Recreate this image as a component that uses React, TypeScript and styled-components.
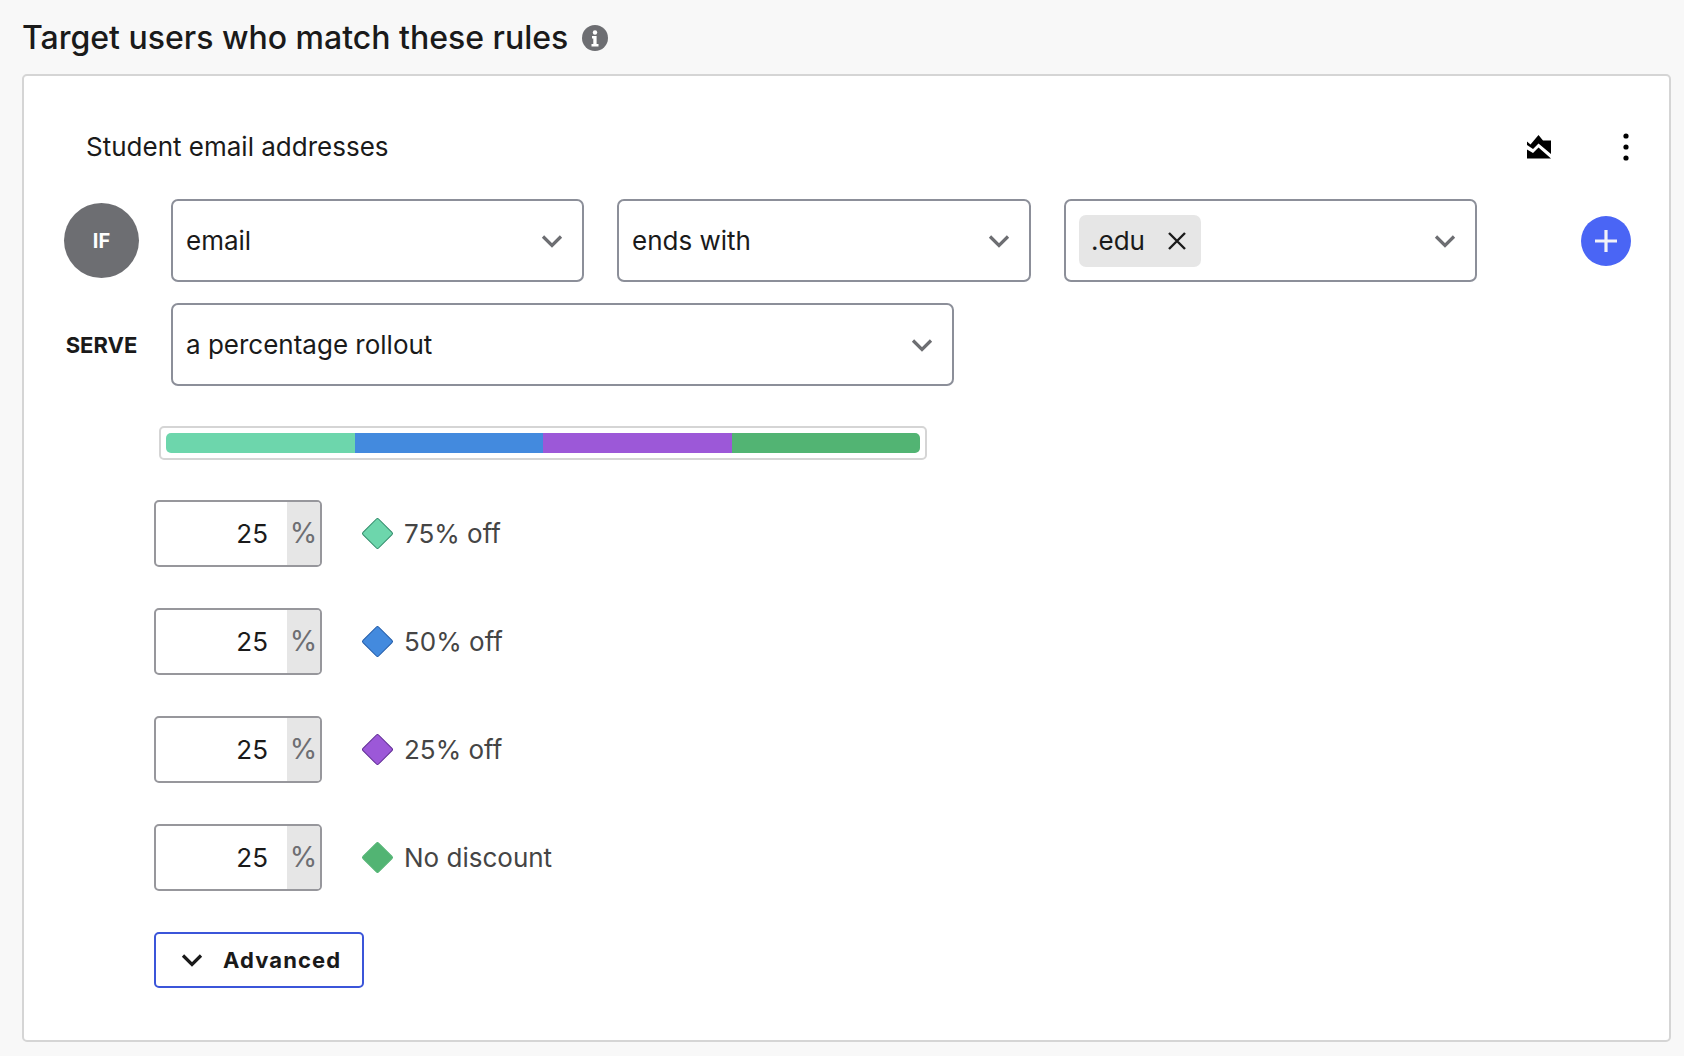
import React from "react";
import styled, { createGlobalStyle } from "styled-components";

const Global = createGlobalStyle`
  html, body { margin: 0; padding: 0; background: #f8f8f8; }
  body { font-family: Inter, "Liberation Sans", sans-serif; color: #1a1a1a; }
`;

const Page = styled.div`
  width: 1684px;
  height: 1056px;
  box-sizing: border-box;
  padding: 17px 13px 0 22px;
  overflow: hidden;
`;
const HeadingRow = styled.div`
  display: flex;
  align-items: center;
  gap: 14px;
  height: 42px;
  margin-bottom: 15px;
`;
const Heading = styled.h2`
  margin: 0;
  font-size: 32px;
  font-weight: 500;
  line-height: 42px;
  color: #1a1a1a;
`;
const Card = styled.section`
  box-sizing: border-box;
  height: 968px;
  background: #fff;
  border: 2px solid #d5d5d5;
  border-radius: 5px;
  padding: 46px 38px 0 40px;
`;
const TitleRow = styled.div`
  display: flex;
  align-items: center;
  height: 50px;
  margin-bottom: 27px;
  padding-left: 22px;
`;
const Title = styled.div`
  flex: 1;
  font-size: 26px;
  line-height: 50px;
`;
const IconSlot = styled.span`
  display: flex;
  align-items: center;
  justify-content: center;
  width: ${(p: { $w: number }) => p.$w}px;
  height: 30px;
`;
const DotsGap = styled.span`
  width: 70px;
`;
const RuleRow = styled.div`
  display: flex;
  align-items: center;
  margin-bottom: 21px;
`;
const IfBadge = styled.div`
  width: 75px;
  height: 75px;
  flex: none;
  margin-right: 32px;
  border-radius: 50%;
  background: #6d6e72;
  color: #fff;
  font-size: 20px;
  font-weight: 700;
  display: flex;
  align-items: center;
  justify-content: center;
`;
const ServeLabel = styled.div`
  width: 75px;
  flex: none;
  margin-right: 32px;
  font-size: 22px;
  font-weight: 700;
  text-align: center;
`;
const Select = styled.div<{ $w: number }>`
  box-sizing: border-box;
  width: ${(p) => p.$w}px;
  height: 83px;
  flex: none;
  margin-right: 33px;
  padding: 0 19px 0 13px;
  border: 2px solid #8c8f99;
  border-radius: 7px;
  background: #fff;
  display: flex;
  align-items: center;
  justify-content: space-between;
  font-size: 26px;
`;
const Tag = styled.div`
  height: 52px;
  width: 122px;
  box-sizing: border-box;
  padding: 0 14px 0 12px;
  border-radius: 7px;
  background: #e6e6e6;
  display: flex;
  align-items: center;
  justify-content: space-between;
`;
const AddButton = styled.button`
  width: 50px;
  height: 50px;
  margin-left: auto;
  padding: 0;
  border: 0;
  border-radius: 50%;
  background: #4a65f5;
  display: flex;
  align-items: center;
  justify-content: center;
`;
const Rollout = styled.div`
  padding-left: 90px;
  margin-top: 40px;
`;
const Bar = styled.div`
  box-sizing: border-box;
  width: 768px;
  height: 34px;
  margin: 0 0 40px 5px;
  padding: 5px;
  border: 2px solid #d5d5d5;
  border-radius: 5px;
  display: flex;
`;
const BarInner = styled.div`
  flex: 1;
  display: flex;
  border-radius: 5px;
  overflow: hidden;
`;
const Segment = styled.div<{ $c: string }>`
  flex: 1;
  background: ${(p) => p.$c};
`;
const VariationRow = styled.div`
  display: flex;
  align-items: center;
  height: 67px;
  margin-bottom: 41px;
`;
const PercentBox = styled.div`
  box-sizing: border-box;
  width: 168px;
  height: 67px;
  flex: none;
  border: 2px solid #97979c;
  border-radius: 5px;
  display: flex;
  overflow: hidden;
  margin-right: 40px;
`;
const PercentValue = styled.div`
  flex: 1;
  padding-right: 19px;
  font-size: 26px;
  line-height: 63px;
  text-align: right;
`;
const PercentUnit = styled.div`
  width: 33px;
  background: #e6e6e6;
  color: #6d6e72;
  font-size: 28px;
  line-height: 63px;
  text-align: center;
`;
const Diamond = styled.span<{ $c: string; $b: string }>`
  width: 23px;
  height: 23px;
  flex: none;
  margin: 0 15px 0 4px;
  box-sizing: border-box;
  background: ${(p) => p.$c};
  border: 1px solid ${(p) => p.$b};
  border-radius: 2px;
  transform: rotate(45deg);
`;
const VariationName = styled.span`
  font-size: 26px;
  color: #454545;
`;
const AdvancedButton = styled.button`
  box-sizing: border-box;
  width: 210px;
  height: 56px;
  margin-top: 10px;
  padding: 0 0 0 25px;
  border: 2px solid #3b55d9;
  border-radius: 5px;
  background: #fff;
  display: flex;
  align-items: center;
  gap: 20px;
  font-family: inherit;
  font-size: 22px;
  font-weight: 700;
  letter-spacing: 1.1px;
  color: #1a1a1a;
`;

const Chevron = ({ color = "#6d6e72" }: { color?: string }) => (
  <svg width="22" height="14" viewBox="0 0 22 14" fill="none">
    <path d="M2 2.5 11 11.5 20 2.5" stroke={color} strokeWidth="3.2" />
  </svg>
);

const variations = [
  { name: "75% off", color: "#6dd6ac", border: "#2d8a68" },
  { name: "50% off", color: "#438ade", border: "#1f5aa8" },
  { name: "25% off", color: "#9c58d8", border: "#5f2a94" },
  { name: "No discount", color: "#52b473", border: "#52b473" },
];

export default function App() {
  return (
    <Page>
      <Global />
      <HeadingRow>
        <Heading>Target users who match these rules</Heading>
        <svg width="26" height="26" viewBox="0 0 26 26">
          <circle cx="13" cy="13" r="13" fill="#6d6e72" />
          <circle cx="13" cy="7.5" r="2.2" fill="#fff" />
          <path d="M10 11h4.6v8H16.5v2.4h-7V19h1.8v-5.6H10z" fill="#fff" />
        </svg>
      </HeadingRow>
      <Card>
        <TitleRow>
          <Title>Student email addresses</Title>
          <IconSlot $w={24}>
            <svg width="24" height="24" viewBox="0 0 24 24">
              <path d="M0 6.5 3.5 9.5 11.5 0 16 5.5H24V19L11.5 8.5 6 14 0 10z" fill="#000" />
              <path d="M0 14.5 6 18 11.5 12.5 24 23.5H0z" fill="#000" />
            </svg>
          </IconSlot>
          <DotsGap />
          <IconSlot $w={10}>
            <svg width="6" height="28" viewBox="0 0 6 28">
              <circle cx="3" cy="3" r="2.6" fill="#000" />
              <circle cx="3" cy="14" r="2.6" fill="#000" />
              <circle cx="3" cy="25" r="2.6" fill="#000" />
            </svg>
          </IconSlot>
        </TitleRow>
        <RuleRow>
          <IfBadge>IF</IfBadge>
          <Select $w={413}>
            email
            <Chevron />
          </Select>
          <Select $w={414}>
            ends with
            <Chevron />
          </Select>
          <Select $w={413}>
            <Tag>
              .edu
              <svg width="20" height="20" viewBox="0 0 20 20">
                <path d="M2 2 18 18M18 2 2 18" stroke="#1a1a1a" strokeWidth="2.4" />
              </svg>
            </Tag>
            <Chevron />
          </Select>
          <AddButton aria-label="Add">
            <svg width="26" height="26" viewBox="0 0 26 26">
              <path d="M13 2v22M2 13h22" stroke="#f2f2f8" strokeWidth="3.2" />
            </svg>
          </AddButton>
        </RuleRow>
        <RuleRow>
          <ServeLabel>SERVE</ServeLabel>
          <Select $w={783}>
            a percentage rollout
            <Chevron />
          </Select>
        </RuleRow>
        <Rollout>
          <Bar>
            <BarInner>
              {variations.map((v) => (
                <Segment key={v.name} $c={v.color} />
              ))}
            </BarInner>
          </Bar>
          {variations.map((v) => (
            <VariationRow key={v.name}>
              <PercentBox>
                <PercentValue>25</PercentValue>
                <PercentUnit>%</PercentUnit>
              </PercentBox>
              <Diamond $c={v.color} $b={v.border} />
              <VariationName>{v.name}</VariationName>
            </VariationRow>
          ))}
          <AdvancedButton>
            <Chevron color="#1a1a1a" />
            Advanced
          </AdvancedButton>
        </Rollout>
      </Card>
    </Page>
  );
}
